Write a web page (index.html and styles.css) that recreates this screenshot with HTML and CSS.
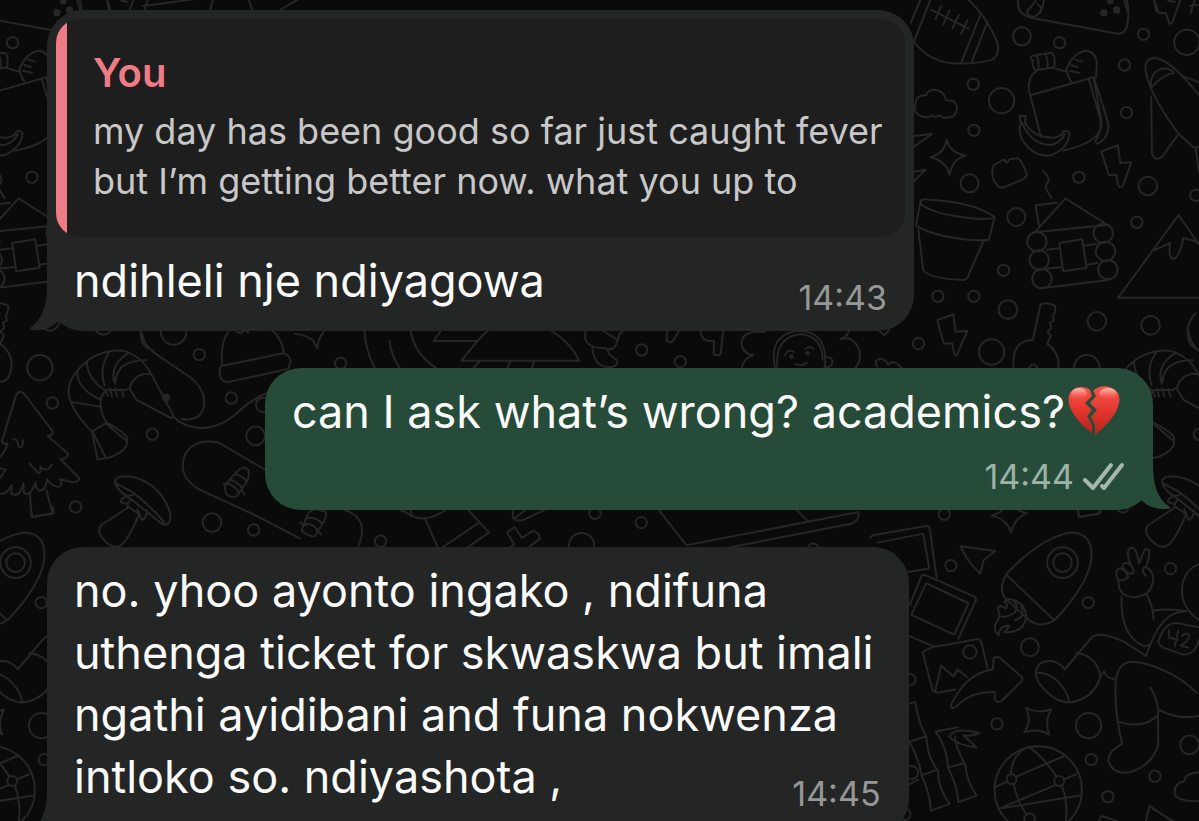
FILE: index.html
```html
<!DOCTYPE html>
<html lang="xh">
<head>
<meta charset="utf-8">
<meta name="viewport" content="width=device-width, initial-scale=1">
<title>Chat</title>
<link rel="stylesheet" href="styles.css">
</head>
<body>
<svg class="wallpaper" viewBox="0 0 1199 821" preserveAspectRatio="xMidYMin slice" aria-hidden="true">
<defs>
<g id="doodles">
<g transform="scale(.3333)">
<!-- upper right -->
<g transform="translate(2700 0)">
<circle cx="366" cy="109" r="27"/><circle cx="479" cy="128" r="17"/><circle cx="731" cy="103" r="17"/><circle cx="861" cy="127" r="38"/><circle cx="674" cy="195" r="17"/><circle cx="220" cy="253" r="17"/><circle cx="305" cy="302" r="38"/><circle cx="680" cy="338" r="17"/><circle cx="222" cy="391" r="17"/><circle cx="209" cy="550" r="27"/><circle cx="537" cy="532" r="17"/><circle cx="744" cy="558" r="28"/><circle cx="888" cy="586" r="17"/><circle cx="349" cy="651" r="27"/><circle cx="711" cy="667" r="17"/><circle cx="311" cy="811" r="17"/><circle cx="114" cy="889" r="17"/><circle cx="222" cy="889" r="17"/><circle cx="324" cy="929" r="28"/><circle cx="591" cy="964" r="28"/><circle cx="752" cy="976" r="28"/><circle cx="56" cy="1031" r="17"/><circle cx="275" cy="1056" r="38"/><circle cx="561" cy="1103" r="38"/>
<path d="M205-2Q265 55 293 130Q299 170 276 179Q225 194 160 190Q90 184 46 130M62-2L33 68M92-2L42 125M240 48L184 188M261 70L216 184M93 29L206 86M123 19L107 58M149 31L130 73M177 45L157 86M203 60L184 101"/>
<path d="M355-2Q348 40 392 53L655 101Q681 100 684 64Q688 20 680-2M432-2Q430 35 405 50Q375 48 384 30Q401 14 409-2M412 12Q432 24 419 40"/>
<g class="dot"><circle cx="612" cy="38" r="8"/><circle cx="650" cy="30" r="8"/><circle cx="631" cy="3" r="7"/></g>
<path d="M762-2L776 38L798 40L809 72Q814 72 818 65L842-2M805 2L825 5"/>
<path d="M398 181Q388 172 398 167L454 158Q466 161 464 190Q466 200 455 203L409 210Q396 205 398 181M411 170Q418 185 416 207M437 163Q446 182 442 204M412 211Q383 230 387 270L423 411M458 203L498 215M391 286L581 232L604 360Q615 425 488 452M567 238L601 355Q608 390 586 425M581 232Q610 315 626 375Q624 420 590 431M515 247Q500 222 500 205Q520 160 555 152Q588 154 591 190L588 233M526 179L546 185M514 195L533 201M511 212L538 219"/>
<path d="M358 347L378 348L375 368Q401 414 465 413Q490 405 490 395Q501 388 509 399Q505 445 455 465Q400 476 365 415Q354 380 364 372ZM367 370Q395 435 455 435Q485 425 495 402"/>
<path d="M72 351Q38 343 46 315Q50 282 78 286Q85 266 109 270Q134 275 138 301Q174 298 171 330Q167 356 130 353Q120 343 114 348Q106 355 97 346Q85 354 72 351ZM43 408L96 402L43 439M43 515L77 509L43 543"/>
<path d="M140 419Q148 457 197 467Q159 474 149 524Q139 483 91 472Q135 460 140 419ZM277 515L281 496L307 480Q315 478 321 489L329 478L355 475Q365 481 381 522Q382 530 368 539L308 563Q299 565 291 555Q276 537 277 515Z"/>
<path d="M604 454L654 436L661 489L694 487L669 558Q659 566 654 554L649 524L627 525ZM112 961L160 943L167 995L202 993L173 1061Q166 1072 162 1057L157 1030L132 1031Z"/>
<path d="M738 215Q730 178 762 174Q808 174 897 285M738 215Q750 285 835 400L880 442L897 442M754 263Q748 222 780 208Q808 200 822 219Q790 222 754 263ZM754 290L756 460Q764 486 786 471L833 406M850 229L897 247M887 443L897 516"/>
<path d="M62 604Q62 596 90 599Q220 606 283 650Q282 658 240 657Q105 647 62 612ZM62 604L48 675Q62 690 130 708Q220 725 267 719L284 651M55 687L70 812Q98 838 193 840Q205 835 207 823L252 720"/>
<path d="M409 692L497 595L623 675L409 696M418 680L407 616L471 608M429 514Q448 528 446 544Q431 559 442 572L455 595M441 749L478 745M440 806L482 802M552 737L588 732M559 794L592 789M478 729L547 718L560 803L490 814ZM429 864L626 840"/><circle cx="411" cy="725" r="29"/><circle cx="418" cy="780" r="29"/><circle cx="426" cy="836" r="29"/><circle cx="610" cy="700" r="29"/><circle cx="617" cy="754" r="29"/><circle cx="624" cy="809" r="29"/>
<path d="M897 733L836 645L655 893H900M764 750L811 729Q804 773 820 777Q839 774 850 714L886 724L900 729M886 940Q850 980 870 1030Q880 1045 900 1052"/>
<path d="M399 1019L422 914Q438 904 465 917Q469 934 459 948L462 962L450 968L454 984L443 994L453 1007L442 1031Q485 1065 474 1110Q468 1145 442 1145M399 1019Q335 1022 341 1100M387 1105Q400 1080 414 1105"/>
</g>
<!-- top edge -->
<path d="M230-5L242 35M320-5L328 35M445-5L430 40M430 18L580 -2M640-5L628 40M745-5L760 40M840 30L900-5"/>
<!-- lower right -->
<g transform="translate(2700 1500)">
<circle cx="133" cy="43" r="17"/><circle cx="153" cy="197" r="17"/><circle cx="565" cy="308" r="17"/><circle cx="812" cy="206" r="17"/><circle cx="390" cy="442" r="27"/><circle cx="210" cy="456" r="20"/><circle cx="30" cy="539" r="17"/><circle cx="291" cy="672" r="17"/><circle cx="566" cy="677" r="38"/><circle cx="574" cy="779" r="17"/><circle cx="869" cy="735" r="28"/><circle cx="765" cy="829" r="17"/><circle cx="624" cy="890" r="17"/><circle cx="15" cy="943" r="17"/><circle cx="35" cy="818" r="20"/>
<path d="M328-10Q336 33 382 39Q344 55 333 97Q320 56 275 47Q322 34 328-10ZM533 20L538 51L602 39L600 20"/>
<path d="M-90 114Q-86 107-78 105L78 78Q88 77 90 88L110 234M-67 128L70 101L88 206L24 216M182 139L286 153L251 181L241 221Q202 185 182 139Z"/>
<path d="M30 315L65 228Q70 222 82 228L225 291Q232 297 226 306L175 416M79 250L206 310L163 404L34 345ZM25 407L103 440M68 456L100 441L235 417Q243 420 245 430L262 503M68 456L98 570Q103 579 120 577L166 569M106 573L124 497L160 530L173 509L202 531"/>
<path d="M157 625Q147 620 164 595Q205 520 279 508L281 478Q286 467 299 473L366 531Q370 539 364 545L307 601Q294 612 285 600L284 576Q220 574 182 608Q166 624 157 625Z"/>
<path d="M322 220Q420 115 510 98Q575 98 575 165Q573 245 465 360Q425 386 390 363L322 301Q290 270 322 220ZM320 225L462 360M340 300Q320 293 314 306Q328 314 317 326Q296 310 294 328Q306 346 286 374Q281 395 296 405Q300 375 329 377L314 397Q370 400 380 351Q375 308 340 300M340 300Q360 320 343 340Q324 352 305 350M365 320Q375 355 346 360"/><circle cx="488" cy="188" r="46"/><circle cx="488" cy="188" r="28"/>
<path d="M654 240Q642 210 660 205Q680 210 685 232Q670 245 654 240M669 205Q665 185 682 190Q700 196 701 218Q688 228 669 205M693 195Q675 155 693 143Q712 145 717 191L732 154Q739 140 748 153Q749 175 738 202Q760 211 760 240Q755 290 700 292Q655 288 656 245M739 200Q720 205 737 228M665 290Q660 405 730 438L748 436M740 282Q760 320 761 357M763 332Q810 324 860 334M855 335Q782 332 739 468M495 508L573 415Q595 390 670 424L739 468"/>
<path d="M897 192Q835 220 849 298Q865 340 897 360M897 382L835 370Q795 364 775 425Q775 434 790 443L850 464Q885 465 897 420M808 390Q805 410 807 412L833 420M835 392L825 440M846 408Q860 394 869 408Q865 423 842 438L866 443"/>
<path d="M495 508Q465 470 421 490Q395 520 422 555Q460 605 506 608Q580 600 602 530Q590 465 529 460M407 519Q455 515 491 565Q505 585 507 607M600 531L612 514Q620 537 648 538M890 578Q820 510 720 488Q640 470 647 580Q647 655 667 732Q622 755 626 785Q640 825 690 817Q760 795 775 733L774 625Q770 595 752 563M655 665Q730 690 775 645M775 628Q830 660 897 648"/>
<path d="M378 624Q417 643 454 628Q433 665 448 704Q414 683 373 697Q398 660 378 624ZM148 710Q165 680 238 700Q207 711 190 706L230 743Q170 735 148 710M107 695L174 682M107 695Q142 740 144 803L193 789Q165 735 165 710M145 804Q173 860 175 907L230 887Q198 840 196 792M20 612L46 606Q55 670 79 709L28 725Q55 770 65 826L112 810Q80 765 80 712M65 826Q90 880 93 932L149 912Q112 860 115 812M25 855L55 839"/>
<circle cx="415" cy="870" r="131"/><circle cx="335" cy="838" r="15"/><circle cx="478" cy="843" r="15"/><circle cx="389" cy="957" r="16"/><path d="M290 860L321 845M348 831L491 769M493 838L529 823M305 925L545 886M303 924L468 855M333 823Q335 770 375 745M470 830Q430 770 385 740M342 853Q348 895 380 945M486 858Q505 910 498 963"/>
<path d="M897 818Q855 820 853 844Q820 850 825 885Q840 907 897 903M738 963L749 918L815 963M760 928L820 963M597 963L604 948L650 963"/>
</g>
<!-- middle left -->
<g transform="translate(0 960)">
<circle cx="157" cy="249" r="17"/><circle cx="598" cy="104" r="17"/><circle cx="521" cy="36" r="38"/><circle cx="694" cy="234" r="17"/><circle cx="767" cy="348" r="28"/><circle cx="457" cy="343" r="17"/><circle cx="227" cy="561" r="17"/><circle cx="636" cy="608" r="28"/><circle cx="761" cy="630" r="17"/><circle cx="790" cy="255" r="22"/>
<path d="M49 224Q60 208 72 221L157 333Q162 347 143 348L203 400Q207 415 182 418L237 474Q238 486 219 487L181 478Q192 502 170 500Q156 497 142 478Q136 513 118 512Q106 505 107 487Q88 535 72 518L70 491Q58 536 34 521L35 495Q17 530-10 520M49 224L5 365Q10 375 22 370Q15 400-5 415M0 445L17 449L-10 490M40 358Q53 355 55 378Q68 390 69 362M89 431L113 458Q124 463 121 440Q140 460 156 434M89 516L95 592L158 581L139 511"/>
<path d="M455 165Q425 105 365 92Q280 90 230 155Q195 195 210 240Q225 285 276 335L293 419L331 412Q385 390 381 362Q390 345 320 308Q303 285 302 250Q300 225 321 210L379 210Q387 200 392 212L410 240L512 294L522 290L455 165Q440 155 410 171Q385 195 392 212M329 96Q295 140 314 197M388 98Q325 135 345 192M439 121Q350 120 346 187M261 125Q260 175 317 212M232 158Q230 205 303 240M219 247L300 260M276 335L320 308M280 340L316 410M320 312L376 360M315 210L324 228M330 206L336 230M346 206L352 230M364 208L371 230M521 291Q550 320 600 324Q660 325 710 280Q750 240 810 215M423 28Q428 75 465 100L575 175Q625 220 609 270Q595 305 545 297"/>
<circle class="dot" cx="498" cy="233" r="9"/>
<path d="M346 492Q340 470 375 469Q430 470 475 515Q520 570 509 605Q500 620 485 611L390 535Q355 515 346 492ZM348 490L395 515Q450 555 495 610M397 525Q362 530 362 546L382 552L394 538M385 548L381 565L303 616Q285 640 325 672Q350 690 372 668Q400 630 417 582L385 561M412 568L425 600Q440 595 441 570"/>
<path d="M900 655L760 583L600 510Q530 470 555 405Q580 355 655 367L800 452M711 455Q728 435 745 450Q752 475 730 500L710 529Q690 535 678 520L674 495ZM702 464Q720 462 738 481M690 480Q710 482 727 505M683 490Q705 500 718 517M670 490L683 493M727 510L733 524"/>
<path d="M666 135Q660 50 700 20L800 20Q845 45 852 100M664 138L850 100Q870 105 872 125L865 147L690 185Q665 190 660 165Q657 145 664 138ZM710 35L722 40L735 30L746 38"/>
</g>
<!-- gap under the first message -->
<g transform="translate(750 930)">
<circle cx="272" cy="160" r="17"/>
<path d="M135 71Q170 75 190 92L202 115Q205 85 225 60M343 55Q345 120 375 175M418 92Q425 140 450 175M481 55Q490 130 560 175M575 60L551 93H680M722 55Q690 80 635 152L988 152Q960 95 900 60M690 153L670 175M782 153L772 175M852 153L847 175M1008 58Q1003 80 1008 93Q1020 115 1065 115Q1090 125 1100 100L1108 75L1120 60M1052 58L1100 88M1028 115Q1030 160 1065 170Q1108 175 1100 150Q1075 135 1073 120"/>
<g transform="translate(1050 0)"><circle cx="125" cy="120" r="17"/><circle cx="241" cy="155" r="17"/><path d="M201 58L200 92Q215 104 223 86L240 58M303 58Q300 98 342 92L341 132Q350 140 362 132L370 58M495 66Q430 60 425 95Q425 130 460 136Q430 145 425 175M525 173Q505 70 598 62Q685 65 675 172M532 170Q525 80 603 72Q668 80 668 150M675 140Q700 140 697 160Q692 175 674 170M555 135Q565 115 582 126M615 118Q630 105 641 116M587 162Q605 171 620 158M748 60Q743 80 722 87Q760 75 778 120Q785 155 765 175M835 60L853 76L868 60M832 170Q820 150 842 146Q860 150 865 165Q880 145 905 174"/><circle class="dot" cx="574" cy="140" r="4"/><circle class="dot" cx="623" cy="130" r="4"/></g>
</g>
<!-- gap under the second message -->
<g transform="translate(600 1470)">
<circle cx="542" cy="154" r="17"/><circle cx="1145" cy="167" r="38"/><circle cx="1185" cy="70" r="17"/>
<path d="M322 75Q335 55 350 58L377 65Q382 80 365 105L345 138Q335 145 305 122ZM318 85Q345 78 365 100M308 103Q335 97 352 120M300 98L318 106M350 122L364 134M435 60Q510 85 475 170M600 60Q620 65 635 78Q680 100 740 58M675 85L713 172M805 60L867 128L800 174M837 98L728 172M630 58L637 78M940 58L938 80Q945 97 970 90L1035 60M945 84L975 60M924 133Q920 127 928 122L944 112L966 144L1000 122Q1018 128 1020 146L985 173M924 133L943 163L932 172"/>
<g transform="translate(1200 0)"><circle cx="124" cy="98" r="17"/><circle cx="640" cy="178" r="17"/><path d="M175 58L260 166L775 66Q780 95 750 102L380 174M588 58L622 92"/></g>
</g>
</g>
</g>
</defs>
<use href="#doodles"/>
<use href="#doodles" x="-1047"/>
<use href="#doodles" x="1047"/>
</svg>
<main class="chat">
<article class="bubble incoming replied">
<blockquote class="quote">
<strong class="quote-name">You</strong>
<p class="quote-text">my day has been good so far just caught fever but I’m getting better now. what you up to</p>
</blockquote>
<div class="line">
<p class="message">ndihleli nje ndiyagowa</p>
<time class="time">14:43</time>
</div>
<svg class="tail" viewBox="0 0 30 46" aria-hidden="true"><path d="M17 0C17 22 12 34 0 43Q-1 45 3 45Q18 47 28 36L30 0Z"/></svg>
</article>
<article class="bubble outgoing">
<p class="message">can I ask what’s wrong? academics?<svg class="heart" viewBox="0 0 54 52" role="img" aria-label="broken heart">
<defs><linearGradient id="red" x1="0" y1="0" x2="0" y2="1"><stop offset="0" stop-color="#f5554b"/><stop offset=".5" stop-color="#e3362d"/><stop offset="1" stop-color="#b5241d"/></linearGradient><linearGradient id="shine" x1="0" y1="0" x2="0" y2="1"><stop offset="0" stop-color="#ffd0c8" stop-opacity=".9"/><stop offset="1" stop-color="#ff7066" stop-opacity="0"/></linearGradient></defs>
<path fill="url(#red)" d="M23 5C18 0 7 1 3 8C-3 20 10 37 25 48L25 40L20 31L25 25L18 18L25 11Z"/>
<path fill="url(#red)" d="M26 6C33-1 45 0 51 8C57 21 43 38 28 50L28 40L24 32L30 25L23 18L29 11Z"/>
<ellipse fill="url(#shine)" cx="12" cy="9" rx="8" ry="6"/><ellipse fill="url(#shine)" cx="41" cy="9" rx="9" ry="6"/>
</svg></p>
<div class="status">
<time class="time">14:44</time>
<svg class="checks" viewBox="0 0 44 30" role="img" aria-label="Delivered"><path d="M3 18L11 26L29 3M20 24L22 26L40 3"/></svg>
</div>
<svg class="tail" viewBox="0 0 30 46" aria-hidden="true"><path d="M13 0C13 22 18 36 30 43Q31 45 27 45Q12 46 2 37L0 0Z"/></svg>
</article>
<article class="bubble incoming latest">
<p class="message">no. yhoo ayonto ingako , ndifuna uthenga ticket for skwaskwa but imali ngathi ayidibani and funa nokwenza intloko so. ndiyashota , <time class="time">14:45</time></p>
<svg class="tail" viewBox="0 0 30 46" aria-hidden="true"><path d="M17 0C17 22 12 34 0 43Q-1 45 3 45Q18 47 28 36L30 0Z"/></svg>
</article>
</main>
</body>
</html>
```
FILE: styles.css
```css
* { box-sizing: border-box; }

body {
  margin: 0;
  height: 100vh;
  overflow: hidden;
  position: relative;
  background: #0a0a0a;
  color: #fafafa;
  font-family: Inter, "Liberation Sans", sans-serif;
}

p, blockquote { margin: 0; }

.wallpaper {
  position: absolute;
  inset: 0;
  width: 100%;
  height: 100%;
  fill: none;
  stroke: #262626;
  stroke-width: 6;
  stroke-linecap: round;
  stroke-linejoin: round;
}

.dot { fill: #262626; }

.chat {
  position: relative;
  display: flex;
  flex-direction: column;
  gap: 37px;
  padding: 10px 46px 0 47px;
}

.bubble {
  position: relative;
  border-radius: 36px;
  padding: 13px 27px;
}

.incoming {
  align-self: flex-start;
  background: #242625;
  fill: #242625;
}

.outgoing {
  align-self: flex-end;
  width: 80.3%;
  background: #264c39;
  fill: #264c39;
}

.replied {
  width: 78.4%;
  padding: 9px 9px 19px;
}

.latest {
  width: 77.9%;
  padding-right: 24px;
  padding-bottom: 21px;
}

.quote {
  padding: 32px 12px 31px 37px;
  border-radius: 24px;
  background: linear-gradient(to right, #ee7c87 11px, #1e1e1e 11px);
}

.quote-name {
  display: block;
  color: #ee7c87;
  font-size: 40px;
  font-weight: 600;
  line-height: 44px;
}

.quote-text {
  margin-top: 11px;
  color: #c8c8c8;
  font-size: 36px;
  line-height: 50px;
}

.message {
  font-size: 45px;
  line-height: 62px;
}

.line {
  display: flex;
  justify-content: space-between;
  align-items: flex-end;
  padding: 13px 18px 0;
}

.time {
  color: #969797;
  font-size: 34px;
  line-height: 40px;
}

.line .time { margin-bottom: -6px; }

.latest .time {
  float: right;
  margin: 28px 4px 0 0;
}

.status {
  display: flex;
  justify-content: flex-end;
  align-items: center;
  gap: 8px;
  margin-top: 14px;
}

.outgoing .time { color: #9db3a7; }

.checks {
  width: 44px;
  height: 30px;
  fill: none;
  stroke: #a4b8ad;
  stroke-width: 4;
  stroke-linecap: round;
  stroke-linejoin: round;
}

.heart {
  width: 54px;
  height: 52px;
  margin-left: 2px;
  vertical-align: -9px;
}

.outgoing .message { margin-right: -6px; }

.tail {
  position: absolute;
  bottom: 0;
  width: 30px;
  height: 46px;
}

.incoming .tail { left: -17px; }

.outgoing .tail { right: -17px; }
```
